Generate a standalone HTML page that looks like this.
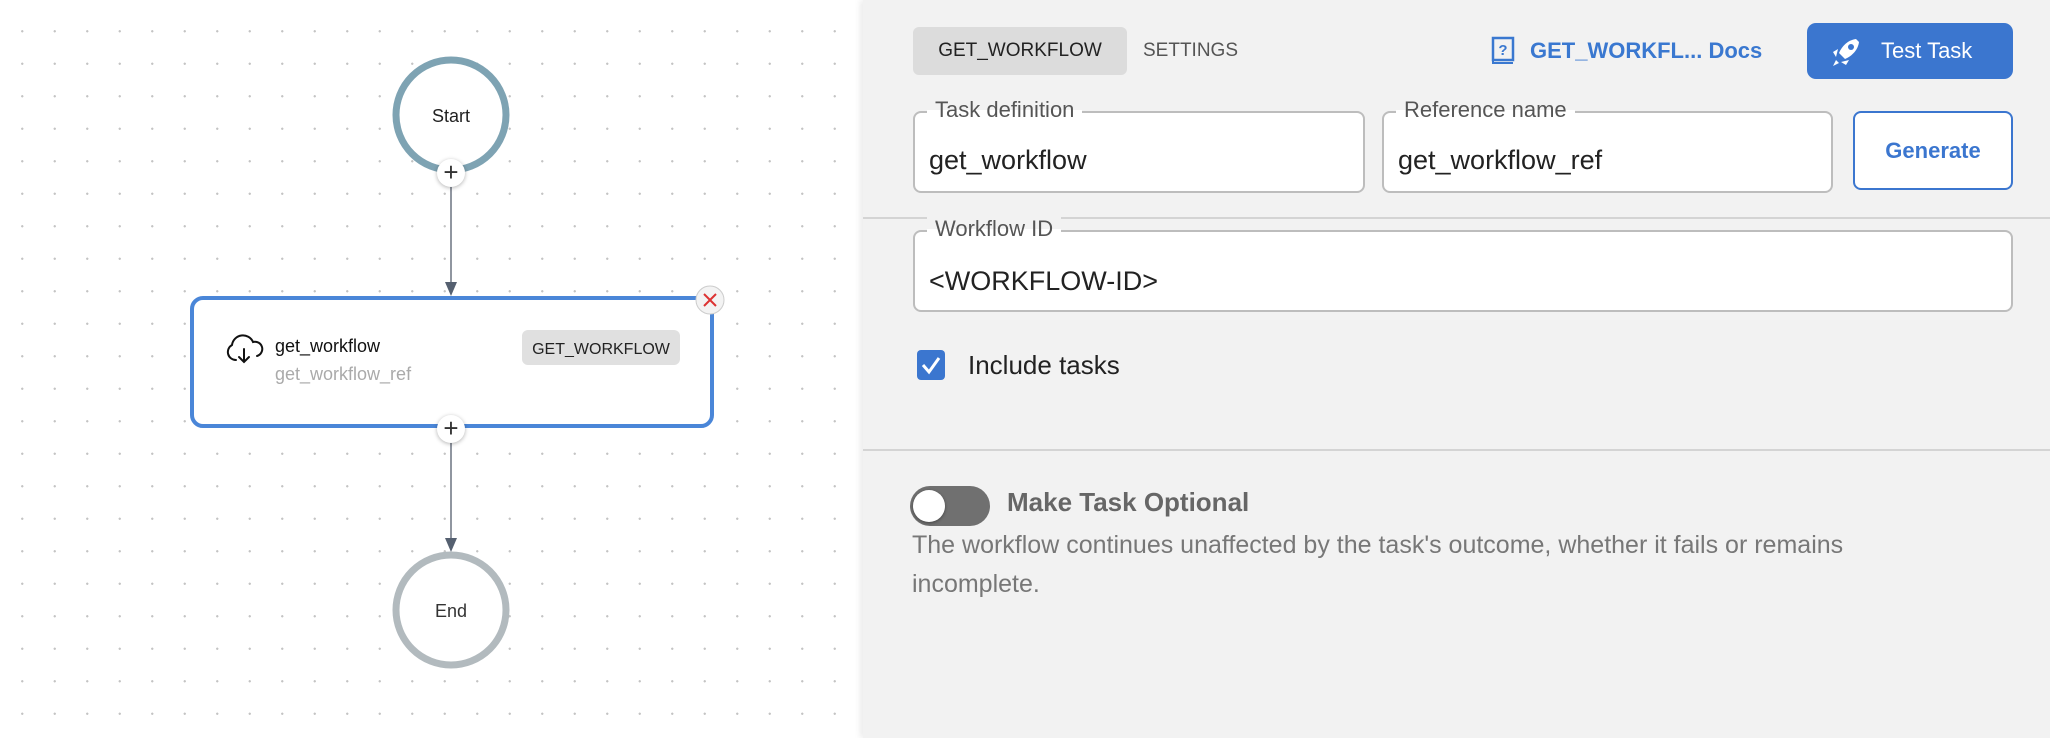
<!DOCTYPE html>
<html><head><meta charset="utf-8"><style>
*{box-sizing:border-box;margin:0;padding:0}
body{width:2050px;height:738px;overflow:hidden;position:relative;font-family:"Liberation Sans",sans-serif;background:#fff}
.a{position:absolute}
#canvas{left:0;top:0;width:863px;height:738px;background-color:#fff;background-image:radial-gradient(circle,#c4c4c4 1px,transparent 1.3px);background-size:32.5px 32.5px;background-position:6px 15px}
#panel{left:863px;top:0;width:1187px;height:738px;background:#f2f2f2;box-shadow:-3px 0 6px rgba(0,0,0,.08)}
.field{position:absolute;border:2px solid #bdbdbd;border-radius:8px;background:#fff}
.lbl{position:absolute;top:-16px;left:12px;background:linear-gradient(#f2f2f2 50%,#fff 50%);padding:0 8px;font-size:22px;color:#555}
.val{position:absolute;left:14px;font-size:27px;color:#222}
.plus{width:28px;height:28px;border-radius:50%;background:#fff;box-shadow:0 1px 4px rgba(0,0,0,.3);text-align:center;line-height:27px;font-size:26px;color:#333}
</style></head><body>
<div class="a" id="canvas"></div>
<svg class="a" style="left:0;top:0" width="863" height="738">
<line x1="451" y1="185" x2="451" y2="288" stroke="#6b7280" stroke-width="1.5"/>
<path d="M445 282 L457 282 L451 296Z" fill="#556070"/>
<line x1="451" y1="440" x2="451" y2="545" stroke="#6b7280" stroke-width="1.5"/>
<path d="M445 538 L457 538 L451 552Z" fill="#556070"/>
<circle cx="451" cy="115" r="55" fill="#fff" stroke="#7ea3b3" stroke-width="7"/>
<text x="451" y="122" font-size="18" text-anchor="middle" fill="#222" font-family="Liberation Sans">Start</text>
<circle cx="451" cy="610" r="55" fill="#fff" stroke="#b2babe" stroke-width="7"/>
<text x="451" y="617" font-size="18" text-anchor="middle" fill="#333" font-family="Liberation Sans">End</text>
<rect x="192" y="298" width="520" height="128" rx="11" fill="#fff" stroke="#4a86d8" stroke-width="4"/>
<g fill="none" stroke="#111" stroke-width="2" stroke-linecap="round">
<path d="M236 360 a8 8 0 0 1 -4 -15 a11 11 0 0 1 21 -3 a7 7 0 0 1 4 14"/>
<path d="M244 349 v13 M239 357 l5 5 l5 -5"/>
</g>
<rect x="522" y="330" width="158" height="35" rx="6" fill="#e0e0e0"/>
<text x="601" y="354" font-size="16" text-anchor="middle" fill="#222" font-family="Liberation Sans">GET_WORKFLOW</text>
<text x="275" y="352" font-size="18" fill="#111" font-family="Liberation Sans">get_workflow</text>
<text x="275" y="380" font-size="18" fill="#aaa" font-family="Liberation Sans">get_workflow_ref</text>
<circle cx="710" cy="300" r="14" fill="#f3f3f3" stroke="#ccc" stroke-width="1"/>
<path d="M704 294 L716 306 M716 294 L704 306" stroke="#d33" stroke-width="2"/>
</svg>
<div class="a plus" style="left:437px;top:159px">+</div>
<div class="a plus" style="left:437px;top:415px">+</div>

<div class="a" id="panel"></div>
<div class="a" style="left:863px;top:217px;width:1187px;height:2px;background:#d4d4d4"></div>
<div class="a" style="left:863px;top:449px;width:1187px;height:2px;background:#d4d4d4"></div>
<div class="a" style="left:913px;top:27px;width:214px;height:48px;background:#dcdcdc;border-radius:6px;font-size:19px;color:#222;line-height:48px;text-align:center">GET_WORKFLOW</div>
<div class="a" style="left:1143px;top:27px;font-size:19px;color:#555;line-height:48px">SETTINGS</div>
<svg class="a" style="left:1490px;top:36px" width="26" height="30"><rect x="3" y="2" width="20" height="22" fill="none" stroke="#3a78d0" stroke-width="2.5"/><path d="M3 24 v3 h20" fill="none" stroke="#3a78d0" stroke-width="2"/><text x="13" y="19" font-size="15" text-anchor="middle" fill="#3a78d0" font-family="Liberation Sans" font-weight="bold">?</text></svg>
<div class="a" style="left:1530px;top:35px;font-size:22px;font-weight:bold;color:#3a78d0;line-height:32px">GET_WORKFL... Docs</div>
<div class="a" style="left:1807px;top:23px;width:206px;height:56px;background:#3b76cf;border-radius:9px;color:#fff;font-size:22px;line-height:56px;padding-left:74px">Test Task</div>
<svg class="a" style="left:1830px;top:36px" width="32" height="32"><path d="M26 3 C18 4 12 10 9 17 L15 23 C22 20 28 14 29 6Z" fill="#fff"/><circle cx="21" cy="11" r="3" fill="#3b76cf"/><path d="M8 13 L3 16 L6 21 Z M19 24 L16 29 L11 26Z M6 24 L3 30 L9 27Z" fill="#fff"/></svg>

<div class="field" style="left:913px;top:111px;width:452px;height:82px"><div class="lbl">Task definition</div><div class="val" style="top:32px">get_workflow</div></div>
<div class="field" style="left:1382px;top:111px;width:451px;height:82px"><div class="lbl">Reference name</div><div class="val" style="top:32px">get_workflow_ref</div></div>
<div class="a" style="left:1853px;top:111px;width:160px;height:79px;border:2px solid #3b76cf;border-radius:8px;background:#fff;color:#3b76cf;font-size:22px;font-weight:bold;line-height:75px;text-align:center">Generate</div>
<div class="field" style="left:913px;top:230px;width:1100px;height:82px"><div class="lbl">Workflow ID</div><div class="val" style="top:34px">&lt;WORKFLOW-ID&gt;</div></div>
<div class="a" style="left:917px;top:350px;width:28px;height:30px;background:#3b76cf;border-radius:4px"></div>
<svg class="a" style="left:917px;top:350px" width="28" height="30"><path d="M6 15 L12 22 L22 8" fill="none" stroke="#fff" stroke-width="3"/></svg>
<div class="a" style="left:968px;top:350px;font-size:26px;color:#222;line-height:30px">Include tasks</div>
<div class="a" style="left:910px;top:486px;width:80px;height:40px;background:#707070;border-radius:20px"></div>
<div class="a" style="left:913px;top:490px;width:32px;height:32px;background:#fff;border-radius:50%;box-shadow:0 1px 3px rgba(0,0,0,.4)"></div>
<div class="a" style="left:1007px;top:487px;font-size:26px;font-weight:bold;color:#666;line-height:30px">Make Task Optional</div>
<div class="a" style="left:912px;top:526px;width:1120px;font-size:25px;color:#777;line-height:39px">The workflow continues unaffected by the task's outcome, whether it fails or remains<br>incomplete.</div>
</body></html>
